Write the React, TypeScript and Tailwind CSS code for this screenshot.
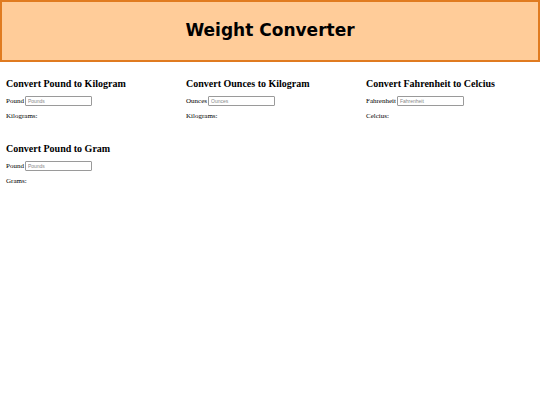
const Converter = ({ title, label, placeholder, result }: { title: string; label: string; placeholder: string; result: string }) => {
  return (
    <div className="pl-[6px]">
      <h2 className="text-[10px] leading-[13px] font-bold mb-[6px]">{title}</h2>
      <div className="flex items-center text-[7px] leading-[9px]">
        <span>{label}</span>
        <input
          type="text"
          placeholder={placeholder}
          className="ml-[1px] w-[67px] h-[10px] border border-[#9a9a9a] rounded-[1px] px-[2px] text-[5px] placeholder:text-[#888] font-['Liberation_Sans',sans-serif]"
        />
      </div>
      <p className="text-[7px] leading-[9px] mt-[6px]">{result}</p>
    </div>
  );
};

export default function App() {
  return (
    <div className="w-[540px] h-[405px] bg-white font-['Liberation_Serif',serif] text-black">
      {/* Header */}
      <div className="h-[62px] border-2 border-[#e07b20] bg-[#ffcc99] flex items-center justify-center">
        <h1 className="font-['DejaVu_Sans',sans-serif] font-bold text-[17px]">Weight Converter</h1>
      </div>

      <div className="grid grid-cols-3 pt-[15px] gap-y-[21px]">
        <Converter title="Convert Pound to Kilogram" label="Pound" placeholder="Pounds" result="Kilograms:" />
        <Converter title="Convert Ounces to Kilogram" label="Ounces" placeholder="Ounces" result="Kilograms:" />
        <Converter title="Convert Fahrenheit to Celcius" label="Fahrenheit" placeholder="Fahrenheit" result="Celcius:" />
        <Converter title="Convert Pound to Gram" label="Pound" placeholder="Pounds" result="Grams:" />
      </div>
    </div>
  );
}
